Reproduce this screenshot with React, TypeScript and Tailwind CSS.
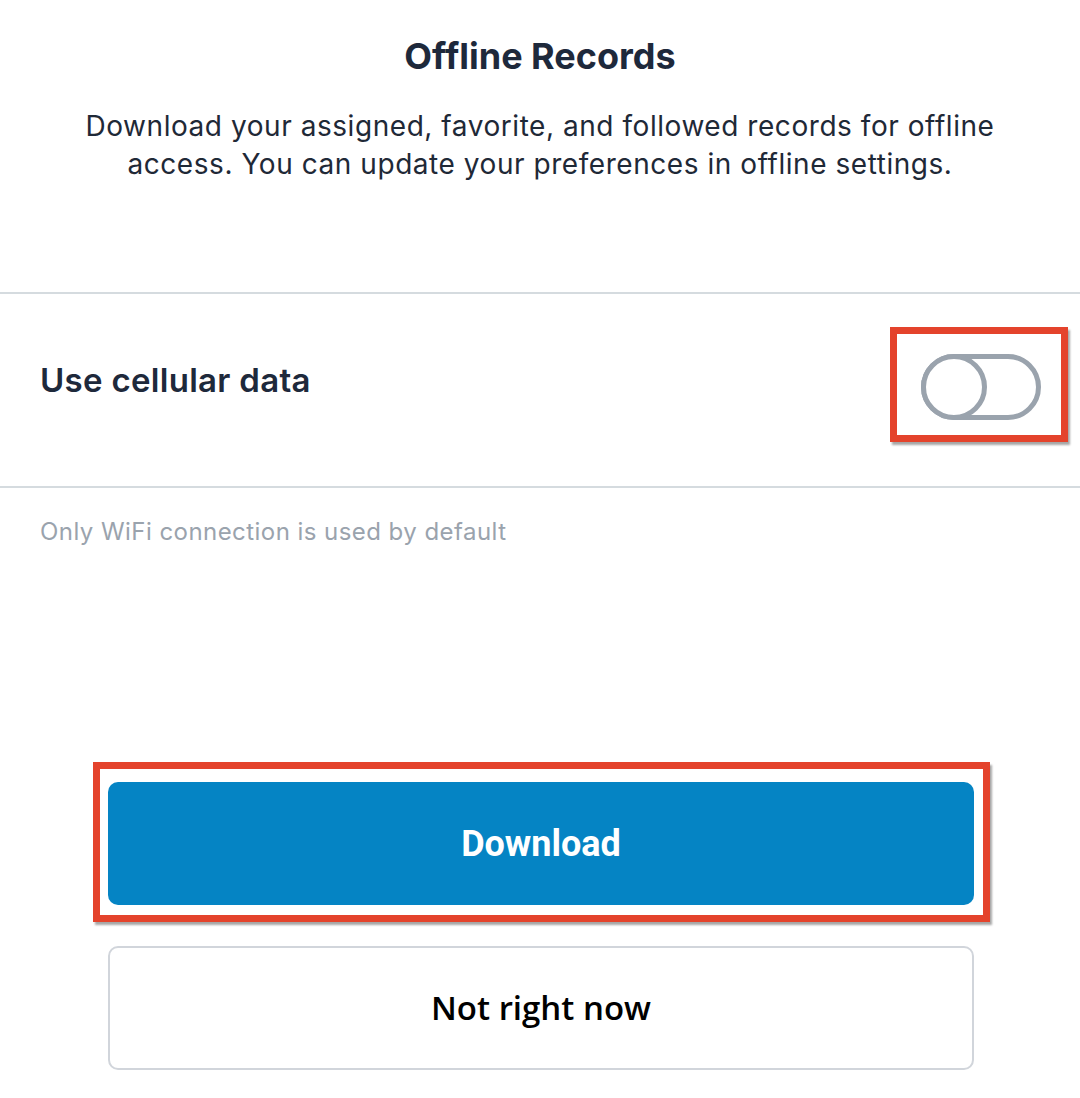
import React from "react";

const inter = { fontFamily: "Inter, 'Noto Sans', sans-serif" };

function Toggle() {
  return (
    <div className="relative mb-[6px]">
      <div className="relative h-[66px] w-[120px] rounded-full border-[5px] border-[#9aa3ad] bg-white">
        <div className="absolute left-[-5px] top-[-5px] h-[66px] w-[66px] rounded-full border-[5px] border-[#9aa3ad] bg-white" />
      </div>
      <div className="pointer-events-none absolute left-[-31px] top-[-27px] h-[115px] w-[178px] border-[7px] border-[#e4432c] shadow-[2px_3px_2px_rgba(0,0,0,0.35)]" />
    </div>
  );
}

export default function App() {
  return (
    <div className="min-h-[1098px] w-[1080px] bg-white" style={inter}>
      <div className="flex flex-col items-center pt-[36px]">
        <h1 className="text-[36px] font-bold leading-[40px] text-[#1e293b]">Offline Records</h1>
        <p className="mt-[31px] w-[960px] text-center text-[28px] leading-[38px] tracking-[0.55px] text-[#1f2937]">
          Download your assigned, favorite, and followed records for offline access. You can update your
          preferences in offline settings.
        </p>
      </div>

      <div className="mt-[109px] border-t-2 border-[#d5dbdf]">
        <div className="flex h-[192px] items-center justify-between pl-[40px] pr-[39px]">
          <span className="pb-[18px] text-[33px] font-semibold tracking-[0.3px] text-[#1e293b]">Use cellular data</span>
          <Toggle />
        </div>
      </div>
      <div className="border-t-2 border-[#d5dbdf] px-[40px] pt-[28px]">
        <p className="text-[24px] leading-[32px] tracking-[0.45px] text-[#9aa3ad]">Only WiFi connection is used by default</p>
      </div>

      <div className="mt-[234px] flex flex-col items-center gap-[41px] pl-[108px] pr-[106px]">
        <div className="relative w-full">
          <button
            className="flex h-[123px] w-full items-center justify-center rounded-[10px] bg-[#0584c4] text-[36px] font-bold text-white"
            style={{ fontFamily: "Roboto, Arial, sans-serif" }}
          >
            Download
          </button>
          <div className="pointer-events-none absolute left-[-15px] top-[-20px] h-[160px] w-[897px] border-[7px] border-[#e4432c] shadow-[2px_3px_2px_rgba(0,0,0,0.35)]" />
        </div>
        <button
          className="flex h-[124px] w-full items-center justify-center rounded-[10px] border-2 border-[#d1d5db] bg-white text-[33px] font-semibold text-black"
          style={{ fontFamily: "'Open Sans', sans-serif" }}
        >
          Not right now
        </button>
      </div>
    </div>
  );
}
